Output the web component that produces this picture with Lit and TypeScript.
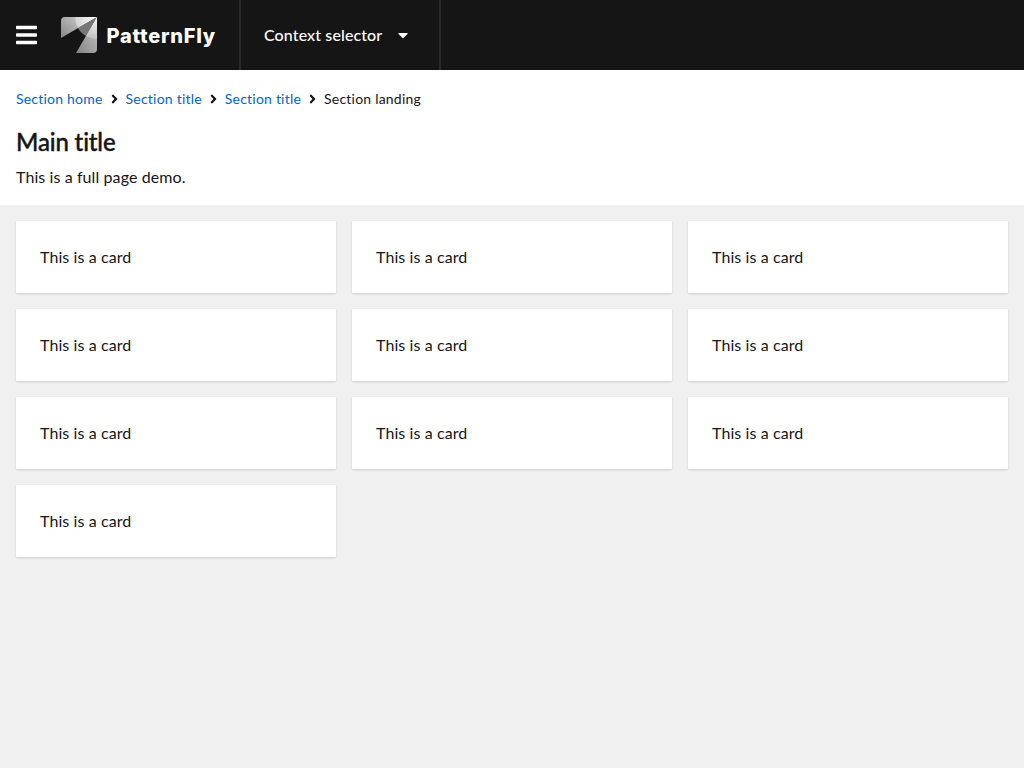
import { LitElement, html, css } from "lit";
import { customElement } from "lit/decorators.js";

const angle = html`<svg class="angle" viewBox="0 0 256 512" aria-hidden="true"><path fill="currentColor" d="M224.3 273l-136 136c-9.4 9.4-24.6 9.4-33.9 0l-22.6-22.6c-9.4-9.4-9.4-24.6 0-33.9l96.4-96.4-96.4-96.4c-9.4-9.4-9.4-24.6 0-33.9L54.3 103c9.4-9.4 24.6-9.4 33.9 0l136 136c9.5 9.4 9.5 24.6.1 34z"/></svg>`;

@customElement("app-root")
export class AppRoot extends LitElement {
  static styles = css`
    :host { display: flex; flex-direction: column; height: 100vh; background: #f0f0f0; color: #151515; font: 16px/24px Lato, "Open Sans", sans-serif; letter-spacing: .09px; font-variant-ligatures: none; }
    * { box-sizing: border-box; }
    svg { display: block; flex: none; }
    header { display: flex; align-items: center; flex: none; height: 70px; background: #151515; color: #fff; }
    .menu { border: 0; padding: 0; background: none; color: #fff; margin: 0 24px 0 16px; }
    .menu svg { width: 21px; height: 24px; }
    .brand { display: flex; align-items: center; width: 178px; gap: 9.5px; font: 800 20px/24px Inter, sans-serif; letter-spacing: .75px; }
    .brand svg { width: 36px; height: 36px; }
    .brand span { padding-top: 1px; }
    .context { display: flex; align-items: center; width: 202px; height: 70px; border: solid #292929; border-width: 0 2px; padding: 0 0 0 23px; gap: 16px; color: #fff; background: none; font: 500 16px/24px Lato, sans-serif; letter-spacing: .11px; font-variant-ligatures: none; }
    .context svg { width: 10px; height: 16px; }
    .head { flex: none; height: 135px; background: #fff; padding: 16px; }
    .crumbs { display: flex; align-items: center; height: 21px; margin-top: 2px; font-size: 14px; line-height: 21px; white-space: nowrap; letter-spacing: .215px; }
    a { color: #06c; text-decoration: none; }
    .angle { width: 7px; height: 14px; margin: 0 8px; }
    h1 { margin: 17px 0 0; font: 500 24px/31px Lato, sans-serif; letter-spacing: -.15px; -webkit-text-stroke: .4px #151515; }
    p { margin: 8px 0 0; }
    .cards { display: grid; grid-template-columns: repeat(3, 1fr); gap: 16px; padding: 16px; }
    .card { height: 72px; padding: 24px; background: #fff; box-shadow: 0 1px 2px 0 rgba(3,3,3,.12), 0 0 2px 0 rgba(3,3,3,.06); }
  `;

  render() {
    return html`
      <header>
        <button class="menu" aria-label="Menu"><svg viewBox="0 0 448 512"><path fill="currentColor" d="M16 132h416c8.837 0 16-7.163 16-16V76c0-8.837-7.163-16-16-16H16C7.163 60 0 67.163 0 76v40c0 8.837 7.163 16 16 16zm0 160h416c8.837 0 16-7.163 16-16v-40c0-8.837-7.163-16-16-16H16c-8.837 0-16 7.163-16 16v40c0 8.837 7.163 16 16 16zm0 160h416c8.837 0 16-7.163 16-16v-40c0-8.837-7.163-16-16-16H16c-8.837 0-16 7.163-16 16v40c0 8.837 7.163 16 16 16z"/></svg></button>
        <div class="brand">
          <svg viewBox="0 0 36 36">
            <defs>
              <linearGradient id="a" gradientUnits="userSpaceOnUse" x1="0" y1="20" x2="18" y2="0"><stop stop-color="#8a8a8a"/><stop offset="1" stop-color="#c4c4c4"/></linearGradient>
              <linearGradient id="b" gradientUnits="userSpaceOnUse" x1="16" y1="34" x2="36" y2="22"><stop stop-color="#858585"/><stop offset="1" stop-color="#b4b4b4"/></linearGradient>
              <linearGradient id="c" gradientUnits="userSpaceOnUse" x1="14" y1="5" x2="34" y2="0"><stop stop-color="#d0d0d0"/><stop offset="1" stop-color="#fff"/></linearGradient>
              <linearGradient id="d" gradientUnits="userSpaceOnUse" x1="28" y1="22" x2="36" y2="3"><stop stop-color="#bcbcbc"/><stop offset="1" stop-color="#f4f4f4"/></linearGradient>
            </defs>
            <path fill="url(#a)" d="M36 0L0 21V4a4 4 0 0 1 4-4z"/>
            <path fill="url(#b)" d="M36 0v32a4 4 0 0 1-4 4H15z"/>
            <path fill="url(#c)" d="M36 0H14a22 22 0 0 0 3 11z"/>
            <path fill="#777" d="M36 0L17 11q3 5.5 8 8z"/>
            <path fill="url(#d)" d="M36 0L25 19a22 22 0 0 0 11 3z"/>
          </svg>
          <span>PatternFly</span>
        </div>
        <button class="context"><span>Context selector</span><svg viewBox="0 0 320 512"><path fill="currentColor" d="M31.3 192h257.3c17.8 0 26.7 21.5 14.1 34.1L174.1 354.8c-7.8 7.8-20.5 7.8-28.3 0L17.2 226.1C4.6 213.5 13.5 192 31.3 192z"/></svg></button>
      </header>
      <section class="head">
        <nav class="crumbs"><a>Section home</a>${angle}<a>Section title</a>${angle}<a>Section title</a>${angle}<span>Section landing</span></nav>
        <h1>Main title</h1>
        <p>This is a full page demo.</p>
      </section>
      <main class="cards">${Array.from({ length: 10 }, () => html`<article class="card">This is a card</article>`)}</main>
    `;
  }
}
